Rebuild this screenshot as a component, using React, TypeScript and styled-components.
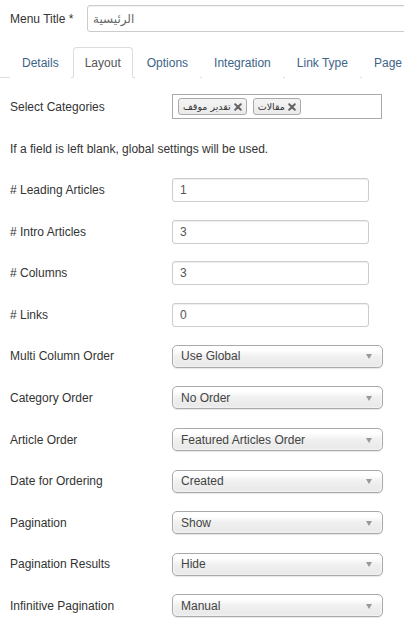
import React from "react";
import styled, { createGlobalStyle } from "styled-components";

const Global = createGlobalStyle`
  html, body { margin: 0; padding: 0; background: #fff; }
  body {
    width: 404px;
    overflow: hidden;
    font-family: "Liberation Sans", Arial, "DejaVu Sans", sans-serif;
    font-size: 12px;
    color: #333;
  }
`;

const Page = styled.div`
  width: 404px;
  overflow: hidden;
  padding-top: 5px;
`;

const TitleRow = styled.div`
  display: flex;
  align-items: center;
  height: 27px;
  white-space: nowrap;
`;

const TitleLabel = styled.label`
  width: 77px;
  padding-left: 10px;
  flex: none;
  color: #333;
`;

const TitleInput = styled.div`
  flex: none;
  width: 340px;
  height: 27px;
  box-sizing: border-box;
  border: 1px solid #ccc;
  border-radius: 3px;
  box-shadow: inset 0 1px 1px rgba(0, 0, 0, 0.06);
  display: flex;
  align-items: center;
  padding-left: 5px;
  color: #666;
  font-family: "DejaVu Sans", "Noto Sans", sans-serif;
  font-size: 12px;
`;

const Tabs = styled.ul`
  list-style: none;
  margin: 15px 0 0;
  padding: 0 0 0 10px;
  display: flex;
  white-space: nowrap;
  border-bottom: 1px solid #ddd;
  height: 30px;
  overflow: visible;
`;

const Tab = styled.li<{ $active?: boolean }>`
  flex: none;
  box-sizing: border-box;
  height: 31px;
  margin-right: 2px;
  margin-bottom: -1px;
  padding: 0 11px;
  display: flex;
  align-items: center;
  line-height: 18px;
  border: 1px solid ${(p) => (p.$active ? "#ddd" : "transparent")};
  border-bottom-color: ${(p) => (p.$active ? "#fff" : "transparent")};
  border-radius: 4px 4px 0 0;
  background: #fff;
  color: ${(p) => (p.$active ? "#555" : "#3d6389")};
`;

const Form = styled.div`
  padding-top: 16px;
`;

const Row = styled.div<{ $h?: number }>`
  display: flex;
  align-items: center;
  height: ${(p) => p.$h ?? 24}px;
  white-space: nowrap;
`;

const Label = styled.label`
  flex: none;
  width: 162px;
  padding-left: 10px;
  color: #333;
`;

const ChosenBox = styled.div`
  width: 210px;
  height: 25px;
  box-sizing: border-box;
  border: 1px solid #aaa;
  background: #fff;
  display: flex;
  align-items: center;
  gap: 6px;
  padding-left: 5px;
`;

const ChosenTag = styled.span`
  display: inline-flex;
  align-items: center;
  gap: 3px;
  height: 17px;
  box-sizing: border-box;
  padding: 0 4px;
  border: 1px solid #aaa;
  border-radius: 3px;
  background: linear-gradient(#f4f4f4, #eaeaea);
  color: #333;
  font-family: "DejaVu Sans", "Noto Sans", sans-serif;
  font-size: 9.5px;
  line-height: 15px;
`;

const Note = styled.p`
  margin: 21px 0 0;
  padding-left: 10px;
  line-height: 18px;
  color: #333;
`;

const Fields = styled.div`
  margin-top: 20px;
  display: flex;
  flex-direction: column;
  gap: 17.6px;
`;

const TextBox = styled.div`
  width: 197px;
  height: 24px;
  box-sizing: border-box;
  border: 1px solid #ccc;
  border-radius: 3px;
  box-shadow: inset 0 1px 1px rgba(0, 0, 0, 0.07);
  display: flex;
  align-items: center;
  padding-left: 7px;
  color: #555;
`;

const SelectBox = styled.div`
  position: relative;
  width: 211px;
  height: 23px;
  box-sizing: border-box;
  border: 1px solid #aaa;
  border-radius: 5px;
  background: linear-gradient(#ffffff 20%, #f0f0f0 50%, #e8e8e8 100%);
  box-shadow: 0 0 3px #fff inset, 0 1px 1px rgba(0, 0, 0, 0.1);
  display: flex;
  align-items: center;
  padding-left: 8px;
  color: #444;
`;

const Arrow = styled.span`
  position: absolute;
  right: 10px;
  top: 50%;
  margin-top: -2px;
  width: 0;
  height: 0;
  border-left: 3px solid transparent;
  border-right: 3px solid transparent;
  border-top: 5px solid #999;
`;

const CloseIcon = () => (
  <svg width="8" height="8" viewBox="0 0 8 8">
    <path d="M1.2 1.2 L6.8 6.8 M6.8 1.2 L1.2 6.8" stroke="#666" strokeWidth="2" strokeLinecap="round" />
  </svg>
);

const inputs = [
  ["# Leading Articles", "1"],
  ["# Intro Articles", "3"],
  ["# Columns", "3"],
  ["# Links", "0"],
];

const selects = [
  ["Multi Column Order", "Use Global"],
  ["Category Order", "No Order"],
  ["Article Order", "Featured Articles Order"],
  ["Date for Ordering", "Created"],
  ["Pagination", "Show"],
  ["Pagination Results", "Hide"],
  ["Infinitive Pagination", "Manual"],
];

const tabs = ["Details", "Layout", "Options", "Integration", "Link Type", "Page Display"];

export default function App() {
  return (
    <Page>
      <Global />
      <TitleRow>
        <TitleLabel>Menu Title *</TitleLabel>
        <TitleInput>الرئيسية</TitleInput>
      </TitleRow>
      <Tabs>
        {tabs.map((t) => (
          <Tab key={t} $active={t === "Layout"}>
            {t}
          </Tab>
        ))}
      </Tabs>
      <Form>
        <Row $h={25}>
          <Label>Select Categories</Label>
          <ChosenBox>
            <ChosenTag>
              <span>تقدير موقف</span>
              <CloseIcon />
            </ChosenTag>
            <ChosenTag>
              <span>مقالات</span>
              <CloseIcon />
            </ChosenTag>
          </ChosenBox>
        </Row>
        <Note>If a field is left blank, global settings will be used.</Note>
        <Fields>
          {inputs.map(([l, v]) => (
            <Row key={l}>
              <Label>{l}</Label>
              <TextBox>{v}</TextBox>
            </Row>
          ))}
          {selects.map(([l, v]) => (
            <Row key={l}>
              <Label>{l}</Label>
              <SelectBox>
                {v}
                <Arrow />
              </SelectBox>
            </Row>
          ))}
        </Fields>
      </Form>
    </Page>
  );
}
